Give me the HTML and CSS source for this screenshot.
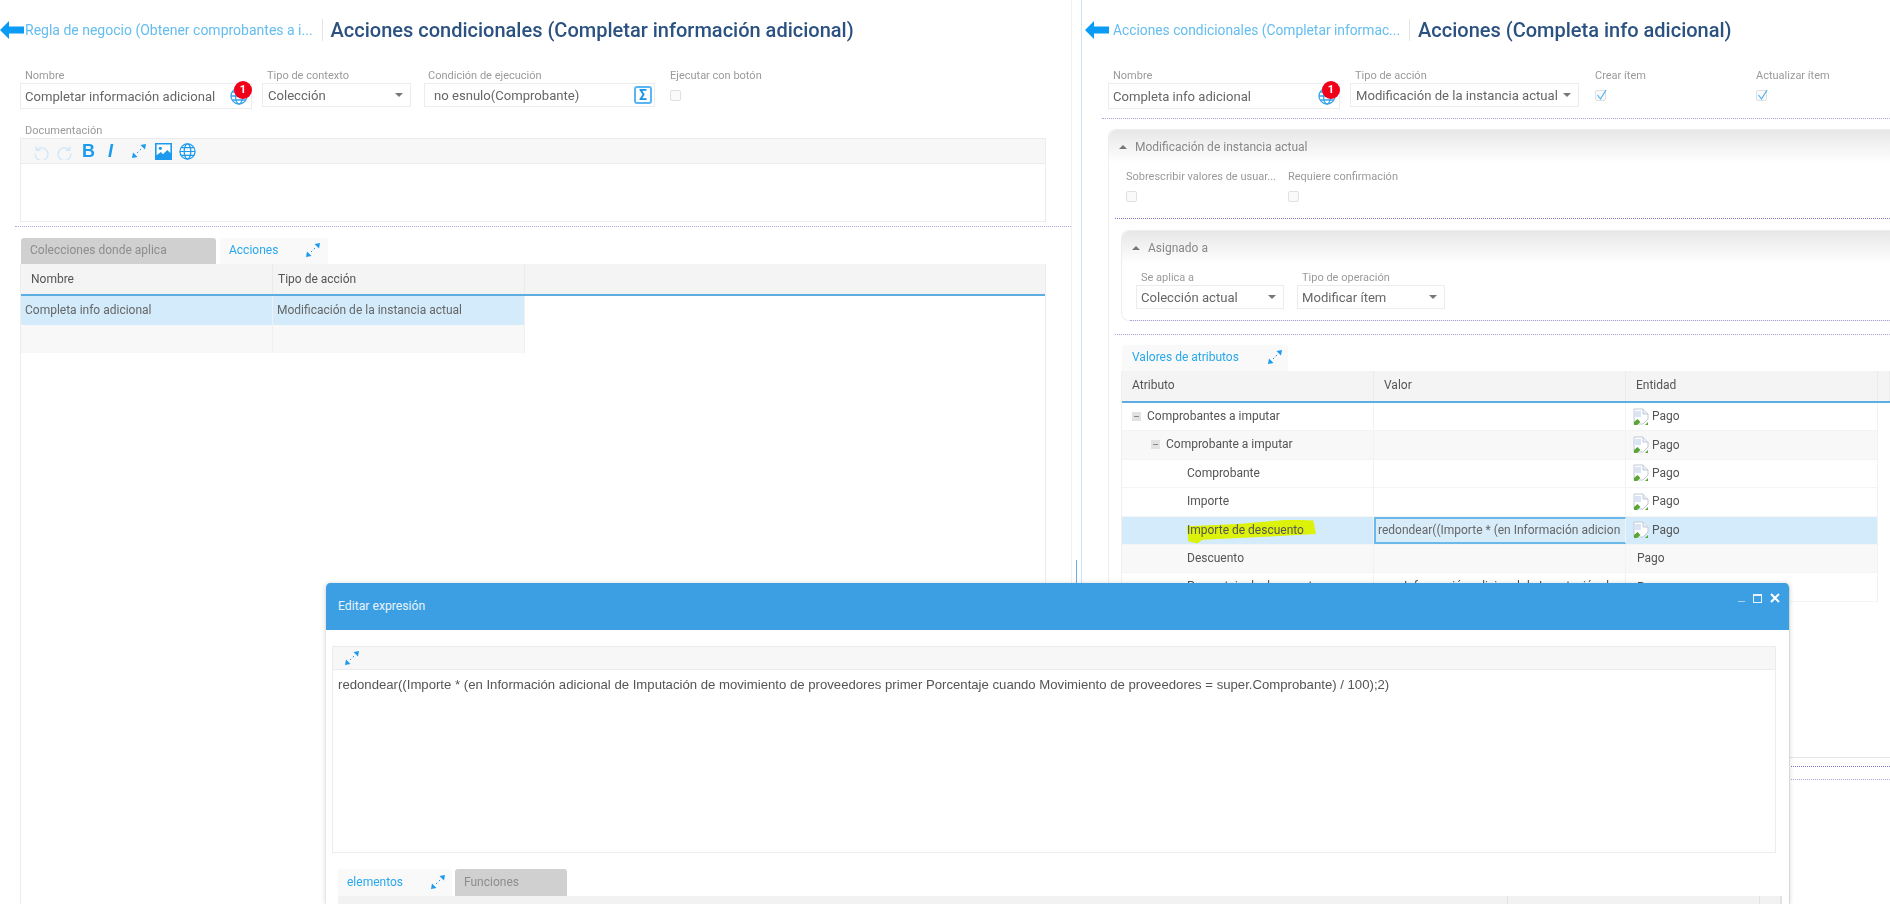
FILE: index.html
```html
<!DOCTYPE html>
<html lang="es">
<head>
    <meta charset="UTF-8">
    <meta name="viewport" content="width=device-width, initial-scale=1.0">
    <title>Acciones condicionales</title>
    <link rel="stylesheet" href="styles.css">
</head>
<body>
    <svg class="sprite" xmlns="http://www.w3.org/2000/svg">
        <symbol id="i-back" viewBox="0 0 24 18">
            <path d="M0 9 9 0v5.500h15v7H9V18z"/>
        </symbol>
        <symbol id="i-expand" viewBox="0 0 14 14">
            <path d="M14 0 8.500 1 13 5.500zM0 14l1-5.500L5.500 13z"/>
            <path d="M9 5 7.800 6.200M6.200 7.800 5 9" stroke="currentColor" fill="none"/>
        </symbol>
        <symbol id="i-globe" viewBox="0 0 18 18">
            <g fill="none" stroke="currentColor" stroke-width="1.300">
                <circle cx="9" cy="9" r="8"/>
                <ellipse cx="9" cy="9" rx="3.500" ry="8"/>
                <path d="M1 9h16M2.200 5h13.600M2.200 13h13.600"/>
            </g>
        </symbol>
        <symbol id="i-broken" viewBox="0 0 16 18">
            <path d="M1 1h9l5 5v5l-5 5H1z" fill="#fff" stroke="#c2cad6"/>
            <path d="M10 1v5h5" fill="#e9eff6" stroke="#c2cad6"/>
            <path d="M2 3h6v6H2z" fill="#d9e5f5"/>
            <path d="M1 17v-3l3.500-3 3 3-3.500 3z" fill="#5aa534"/>
            <path d="M12 17l3-3v3z" fill="#5aa534"/>
        </symbol>
        <symbol id="i-tick" viewBox="0 0 11 12">
            <path d="M1.500 6 4.500 10 10 1" fill="none" stroke="#4fb3f2" stroke-width="1.200"/>
        </symbol>
    </svg>

    <div class="app">
        <section class="pane pane-left">
            <header class="page-head">
                <svg class="back"><use href="#i-back"/></svg>
                <a class="crumb crumb-left">Regla de negocio (Obtener comprobantes a i...</a>
                <h1 class="title">Acciones condicionales (Completar información adicional)</h1>
            </header>

            <div class="form-row form-row-left">
                <div class="field w-name">
                    <label>Nombre</label>
                    <div class="control control-tall">
                        <span>Completar información adicional</span>
                        <span class="globe-wrap">
                            <svg class="globe"><use href="#i-globe"/></svg>
                            <b class="badge">1</b>
                        </span>
                    </div>
                </div>
                <div class="field w-context">
                    <label>Tipo de contexto</label>
                    <div class="control select"><span>Colección</span><i class="caret"></i></div>
                </div>
                <div class="field w-cond">
                    <label class="label-cond">Condición de ejecución</label>
                    <div class="control cond"><span>no esnulo(Comprobante)</span><b class="sigma">Σ</b></div>
                </div>
                <div class="field">
                    <label class="label-flush">Ejecutar con botón</label>
                    <i class="check"></i>
                </div>
            </div>

            <div class="doc">
                <label>Documentación</label>
                <div class="editor">
                    <div class="editor-tools">
                        <svg class="tool faded" viewBox="0 0 16 16"><path d="M4 3v4h4M4.500 6.500A6 6 0 1 1 3 10" fill="none" stroke="currentColor" stroke-width="1.200"/></svg>
                        <svg class="tool faded" viewBox="0 0 16 16"><path d="M12 3v4H8M11.500 6.500A6 6 0 1 0 13 10" fill="none" stroke="currentColor" stroke-width="1.200"/></svg>
                        <b class="tool-b">B</b>
                        <i class="tool-i">I</i>
                        <svg class="tool-x"><use href="#i-expand"/></svg>
                        <svg class="tool" viewBox="0 0 16 16"><path d="M0 0h16v16H0z"/><path d="M1.500 1.500h13v8l-3-3-4 4-2-2-4 3z" fill="#fff"/><circle cx="5" cy="5" r="1.500"/></svg>
                        <svg class="tool"><use href="#i-globe"/></svg>
                    </div>
                </div>
            </div>

            <hr class="dots dots-left">

            <div class="tabs tabs-left">
                <span class="tab tab-off tab-colecciones">Colecciones donde aplica</span>
                <span class="tab tab-on tab-acciones">Acciones<svg class="expand"><use href="#i-expand"/></svg></span>
            </div>
            <div class="grid-left">
                <div class="grid-head">
                    <span>Nombre</span><span>Tipo de acción</span><span></span>
                </div>
                <div class="grid-row selected">
                    <span>Completa info adicional</span><span>Modificación de la instancia actual</span>
                </div>
                <div class="grid-row alt">
                    <span></span><span></span>
                </div>
            </div>
        </section>

        <div class="splitter"><i class="handle"></i></div>

        <section class="pane pane-right">
            <header class="page-head">
                <svg class="back"><use href="#i-back"/></svg>
                <a class="crumb crumb-right">Acciones condicionales (Completar informac...</a>
                <h1 class="title">Acciones (Completa info adicional)</h1>
            </header>

            <div class="form-row form-row-right">
                <div class="field w-name">
                    <label>Nombre</label>
                    <div class="control control-tall">
                        <span>Completa info adicional</span>
                        <span class="globe-wrap">
                            <svg class="globe"><use href="#i-globe"/></svg>
                            <b class="badge">1</b>
                        </span>
                    </div>
                </div>
                <div class="field w-action">
                    <label>Tipo de acción</label>
                    <div class="control select"><span>Modificación de la instancia actual</span><i class="caret"></i></div>
                </div>
                <div class="field w-create">
                    <label class="label-flush">Crear ítem</label>
                    <i class="check"><svg class="tick"><use href="#i-tick"/></svg></i>
                </div>
                <div class="field">
                    <label class="label-flush">Actualizar ítem</label>
                    <i class="check"><svg class="tick"><use href="#i-tick"/></svg></i>
                </div>
            </div>

            <hr class="dots dots-right">

            <div class="panel panel-outer">
                <div class="panel-head"><i class="tri"></i>Modificación de instancia actual</div>
                <div class="flags">
                    <div class="flag w-flag">
                        <label>Sobrescribir valores de usuar...</label>
                        <i class="check"></i>
                    </div>
                    <div class="flag">
                        <label>Requiere confirmación</label>
                        <i class="check"></i>
                    </div>
                </div>
                <hr class="dots dots-inner">

                <div class="panel panel-inner">
                    <div class="panel-head"><i class="tri"></i>Asignado a</div>
                    <div class="form-row form-row-assign">
                        <div class="field w-assign">
                            <label>Se aplica a</label>
                            <div class="control select"><span>Colección actual</span><i class="caret"></i></div>
                        </div>
                        <div class="field w-assign">
                            <label>Tipo de operación</label>
                            <div class="control select"><span>Modificar ítem</span><i class="caret"></i></div>
                        </div>
                    </div>
                    <hr class="dots dots-panel">
                </div>
                <hr class="dots dots-after">

                <div class="tabs tabs-values">
                    <span class="tab tab-on tab-valores">Valores de atributos<svg class="expand"><use href="#i-expand"/></svg></span>
                </div>
                <div class="tree">
                    <div class="tree-head">
                        <span>Atributo</span><span>Valor</span><span>Entidad</span><span></span>
                    </div>
                    <div class="tree-row">
                        <span class="lvl-0"><i class="minus"></i>Comprobantes a imputar</span><span></span>
                        <span class="ent"><svg class="broken"><use href="#i-broken"/></svg>Pago</span>
                    </div>
                    <div class="tree-row alt">
                        <span class="lvl-1"><i class="minus"></i>Comprobante a imputar</span><span></span>
                        <span class="ent"><svg class="broken"><use href="#i-broken"/></svg>Pago</span>
                    </div>
                    <div class="tree-row">
                        <span class="lvl-2">Comprobante</span><span></span>
                        <span class="ent"><svg class="broken"><use href="#i-broken"/></svg>Pago</span>
                    </div>
                    <div class="tree-row">
                        <span class="lvl-2">Importe</span><span></span>
                        <span class="ent"><svg class="broken"><use href="#i-broken"/></svg>Pago</span>
                    </div>
                    <div class="tree-row selected">
                        <span class="lvl-2"><em class="marker">Importe de descuento</em></span>
                        <span class="cell-edit">redondear((Importe * (en Información adicion</span>
                        <span class="ent"><svg class="broken"><use href="#i-broken"/></svg>Pago</span>
                    </div>
                    <div class="tree-row alt">
                        <span class="lvl-2">Descuento</span><span></span>
                        <span class="ent ent-plain">Pago</span>
                    </div>
                    <div class="tree-row">
                        <span class="lvl-2">Porcentaje de descuento</span>
                        <span class="cell-value">en Información adicional de Imputación de</span>
                        <span class="ent ent-plain">Pago</span>
                    </div>
                </div>
            </div>
            <hr class="dots dots-foot-a">
            <hr class="dots dots-foot-b">
        </section>
    </div>

    <div class="modal">
        <div class="modal-head">
            <span>Editar expresión</span>
            <div class="modal-actions">
                <i class="win-min"></i><i class="win-max"></i>
                <svg class="win-close" viewBox="0 0 10 10"><path d="M1 1l8 8M9 1 1 9"/></svg>
            </div>
        </div>
        <div class="expr">
            <div class="expr-tools"><svg class="expand"><use href="#i-expand"/></svg></div>
            <div class="expr-body">redondear((Importe * (en Información adicional de Imputación de movimiento de proveedores primer Porcentaje cuando Movimiento de proveedores = super.Comprobante) / 100);2)</div>
        </div>
        <div class="tabs tabs-modal">
            <span class="tab tab-on tab-elementos">elementos<svg class="expand"><use href="#i-expand"/></svg></span>
            <span class="tab tab-off tab-funciones">Funciones</span>
        </div>
        <div class="modal-grid"><span></span><span></span><span></span><span></span></div>
    </div>
</body>
</html>
```

FILE: styles.css
```css
* {
    box-sizing: border-box;
}
html, body {
    margin: 0;
    height: 904px;
    overflow: hidden;
}
body {
    position: relative;
    font-family: Roboto, "Liberation Sans", sans-serif;
    font-size: 12px;
    color: #555;
    background-color: white;
    filter: blur(0.45px);
}
.sprite {
    display: none;
}
label {
    display: block;
    height: 15px;
    line-height: 16px;
    font-size: 11px;
    color: #9a9a9a;
    padding-left: 5px;
    white-space: nowrap;
}
.label-flush {
    padding-left: 0;
}
.label-cond {
    padding-left: 4px;
}

/* panes */
.app {
    display: flex;
    height: 904px;
}
.pane {
    overflow: hidden;
    height: 904px;
}
.pane-left {
    width: 1071px;
    flex: none;
}
.pane-right {
    flex: 1;
    min-width: 0;
}
.splitter {
    position: relative;
    width: 11px;
    flex: none;
    border-left: 1px solid #f1f1f1;
    border-right: 1px solid #cfe3f8;
}
.handle {
    position: absolute;
    left: 4px;
    top: 560px;
    width: 1px;
    height: 40px;
    background-color: #6aaee8;
}

/* header */
.page-head {
    display: flex;
    align-items: center;
    height: 60px;
    white-space: nowrap;
}
.back {
    width: 24px;
    height: 18px;
    fill: #0a9bf5;
    flex: none;
}
.pane-right .back {
    margin-left: 3px;
}
.crumb {
    color: #63bdf0;
    font-size: 14px;
    margin-left: 1px;
    padding-right: 9px;
    border-right: 1px solid #e4e4e4;
    line-height: 22px;
}
.crumb-right {
    margin-left: 4px;
    font-size: 13.800px;
}
.title {
    margin: 0 0 0 8px;
    font-size: 20px;
    font-weight: 500;
    color: #2b5180;
}

/* form */
.form-row {
    display: flex;
    margin-top: 8px;
}
.form-row-left {
    padding-left: 20px;
}
.form-row-right {
    padding-left: 26px;
}
.field {
    flex: none;
}
.w-name {
    width: 232px;
    margin-right: 10px;
}
.w-context {
    width: 149px;
    margin-right: 13px;
}
.w-cond {
    width: 231px;
    margin-right: 15px;
}
.w-action {
    width: 229px;
    margin-right: 16px;
}
.w-create {
    width: 161px;
}
.control {
    display: flex;
    align-items: center;
    justify-content: space-between;
    height: 24px;
    border: 1px solid #ececec;
    background-color: white;
    padding-left: 5px;
    font-size: 13.100px;
    color: #666;
    white-space: nowrap;
}
.control-tall {
    height: 26px;
    padding-left: 4px;
    padding-right: 3px;
}
.select {
    padding-right: 7px;
}
.w-assign .select {
    padding-left: 4px;
}
.cond {
    padding-left: 9px;
    padding-right: 2px;
}
.caret {
    flex: none;
    border-left: 4px solid transparent;
    border-right: 4px solid transparent;
    border-top: 4px solid #777;
}
.globe-wrap {
    position: relative;
    display: block;
    width: 18px;
    height: 18px;
}
.globe {
    display: block;
    width: 18px;
    height: 18px;
    color: #3aa3ec;
}
.badge {
    position: absolute;
    left: 4px;
    top: -6px;
    width: 18px;
    height: 18px;
    border-radius: 50%;
    background-color: #f00019;
    color: white;
    font-size: 11px;
    line-height: 18px;
    text-align: center;
}
.sigma {
    width: 18px;
    height: 18px;
    border: 2px solid #58b6f4;
    border-radius: 3px;
    color: #1b93e6;
    font-size: 14px;
    line-height: 14px;
    text-align: center;
}
.check {
    position: relative;
    display: block;
    width: 11px;
    height: 11px;
    margin-top: 7px;
    border: 1px solid #e0e0e0;
    border-radius: 2px;
    background-color: #fafafa;
}
.tick {
    position: absolute;
    left: 0;
    top: -2px;
    width: 11px;
    height: 12px;
}

/* documentation */
.doc {
    margin: 14px 25px 0 20px;
}
.editor {
    height: 84px;
    border: 1px solid #ececec;
}
.editor-tools {
    display: flex;
    align-items: center;
    gap: 7px;
    height: 25px;
    padding-left: 11px;
    background-color: #f7f7f7;
    border-bottom: 1px solid #ececec;
    color: #1c9bee;
}
.tool {
    width: 17px;
    height: 17px;
    fill: currentColor;
}
.faded {
    color: #cfe6f8;
}
.faded + .faded {
    margin-left: 1px;
}
.tool-b {
    width: 14px;
    font-family: "Liberation Sans", sans-serif;
    font-size: 18px;
    margin-left: 1px;
}
.tool-i {
    width: 14px;
    font-family: "Liberation Sans", sans-serif;
    font-size: 18px;
    font-weight: bold;
    margin-left: 5px;
}
.tool-x {
    width: 14px;
    height: 14px;
    fill: currentColor;
    margin-left: 3px;
}
.tool-x + .tool {
    margin-left: 2px;
}

.dots {
    height: 0;
    margin: 0;
    border: 0;
    border-top: 1px dotted #aaa6dc;
}
.dots-left {
    margin: 4px 0 0 15px;
}
.dots-right {
    margin: 9px 0 0 20px;
}

/* tabs */
.tabs {
    display: flex;
    gap: 4px;
    height: 26px;
}
.tabs-left {
    margin: 11px 0 0 21px;
}
.tab {
    display: flex;
    align-items: center;
    justify-content: space-between;
    height: 26px;
    border-bottom: 2px solid transparent;
    border-radius: 3px 3px 0 0;
    white-space: nowrap;
}
.tab-off {
    background-color: #d0d0d0;
    color: #8d8d8d;
}
.tab-on {
    background-color: #f9f9f9;
    color: #29a8ec;
}
.expand {
    width: 14px;
    height: 14px;
    fill: #1c9bee;
    color: #1c9bee;
}
.tab-colecciones {
    width: 195px;
    padding-left: 9px;
}
.tab-acciones {
    width: 108px;
    padding: 0 8px 0 9px;
}
.tab-valores {
    width: 166px;
    padding: 0 6px 0 10px;
}
.tab-elementos {
    width: 114px;
    padding: 0 7px 0 9px;
}
.tab-funciones {
    width: 112px;
    padding-left: 9px;
}

/* left grid */
.grid-left {
    margin-left: 20px;
    width: 1026px;
    height: 640px;
    border-left: 1px solid #ececec;
    border-right: 1px solid #ececec;
}
.grid-head, .grid-row {
    display: grid;
    grid-template-columns: 252px 252px;
}
.grid-head {
    grid-template-columns: 252px 252px 1fr;
    height: 32px;
    background-color: #f4f4f4;
    border-bottom: 2px solid #5dade2;
    color: #555;
}
.grid-head span {
    padding-left: 10px;
    line-height: 30px;
    border-right: 1px solid #ebebeb;
}
.grid-head span:nth-child(2) {
    padding-left: 5px;
}
.grid-head span:last-child {
    border-right: 0;
}
.grid-row {
    width: 504px;
    height: 28.500px;
    line-height: 29px;
    color: #666;
}
.grid-row span {
    padding-left: 4px;
    border-right: 1px solid #f0f0f0;
}
.selected {
    background-color: #d3ebfa;
}
.alt {
    background-color: #f8f8f8;
}

/* right side panels */
.panel {
    border: 1px solid #eeeeee;
    border-right: 0;
    border-radius: 8px 0 0 8px;
}
.panel-outer {
    margin: 10px 0 0 26px;
    height: 629px;
    border-bottom: 1px solid #e4e4e4;
    border-radius: 8px 0 0 0;
}
.panel-head {
    display: flex;
    align-items: center;
    gap: 8px;
    height: 33px;
    padding-left: 10px;
    background: linear-gradient(#e7e7e7, #ffffff);
    border-radius: 8px 0 0 0;
    color: #888;
}
.tri {
    border-left: 4px solid transparent;
    border-right: 4px solid transparent;
    border-bottom: 4px solid #777;
}
.flags {
    display: flex;
    height: 55px;
    padding: 6px 0 0 17px;
}
.flag label {
    padding-left: 0;
}
.w-flag {
    width: 162px;
}
.dots-inner {
    margin-left: 6px;
    border-top-color: #7e78c8;
}
.panel-inner {
    margin: 11px 0 0 12px;
    height: 91px;
}
.form-row-assign {
    margin-top: 6px;
    padding-left: 14px;
    gap: 13px;
}
.w-assign {
    width: 148px;
}
.dots-panel {
    margin: 11px 0 0 8px;
}
.dots-after {
    margin: 13px 0 0 6px;
}
.tabs-values {
    margin: 10px 0 0 13px;
}

/* tree */
.tree {
    margin-left: 12px;
    border-left: 1px solid #f0f0f0;
}
.tree-head, .tree-row {
    display: grid;
    grid-template-columns: 252px 252px 252px 1fr;
}
.tree-head {
    height: 32px;
    background-color: #f4f4f4;
    border-bottom: 2px solid #5dade2;
    line-height: 29px;
    color: #555;
}
.tree-head span {
    padding-left: 10px;
    border-right: 1px solid #ebebeb;
}
.tree-row {
    width: 756px;
    height: 28.400px;
    grid-template-columns: 252px 252px 252px;
    line-height: 27px;
    border-bottom: 1px solid #f4f4f4;
    color: #555;
    border-right: 1px solid #f0f0f0;
}
.tree-row span {
    border-right: 1px solid #f2f2f2;
    white-space: nowrap;
    overflow: hidden;
}
.lvl-0 {
    padding-left: 10px;
}
.lvl-1 {
    padding-left: 29px;
}
.lvl-2 {
    padding-left: 65px;
}
.minus {
    display: inline-block;
    position: relative;
    width: 9px;
    height: 9px;
    margin-right: 6px;
    background-color: #e2e2e2;
    vertical-align: -1px;
}
.minus::after {
    content: "";
    position: absolute;
    left: 2px;
    right: 2px;
    top: 4px;
    height: 1px;
    background-color: #888;
}
.ent {
    display: flex;
    align-items: center;
    padding-left: 7px;
}
.ent-plain {
    padding-left: 11px;
}
.broken {
    width: 16px;
    height: 18px;
    margin-right: 3px;
    flex: none;
}
.tree-row .lvl-2:has(.marker) {
    overflow: visible;
}
.marker {
    position: relative;
    z-index: 0;
    font-style: normal;
}
/* brush stroke behind the text, slightly uneven */
.marker::before {
    content: "";
    position: absolute;
    z-index: -1;
    left: 0;
    top: -3px;
    width: 129px;
    height: 24px;
    background-color: #dcf20a;
    clip-path: polygon(0 28%, 40% 18%, 80% 0, 98% 4%, 100% 60%, 60% 72%, 12% 84%, 8% 100%, 1% 90%);
}
.cell-edit {
    padding-left: 2px;
    border: 2px solid #6bb8ea;
    line-height: 23px;
    background-color: #d8ecfa;
    color: #666;
}
.cell-value {
    padding-left: 14px;
}
.dots-foot-a {
    margin: 8px 0 0 0;
    border-top-color: #7e78c8;
}
.dots-foot-b {
    margin: 12px 0 0 0;
}

/* modal */
.modal {
    position: absolute;
    left: 325px;
    top: 583px;
    width: 1465px;
    height: 321px;
    overflow: hidden;
    background-color: white;
    border-right: 1px solid #d3dcd3;
    border-left: 1px solid #e8e8e8;
    border-radius: 5px 5px 0 0;
    box-shadow: 0 0 4px rgba(0, 0, 0, 0.15);
}
.modal-head {
    display: flex;
    justify-content: space-between;
    height: 47px;
    padding-left: 12px;
    line-height: 46px;
    background-color: #3d9fe3;
    color: #e8f4fc;
    font-size: 12.200px;
}
.modal-actions {
    display: flex;
    align-items: center;
    gap: 8px;
    height: 30px;
    padding-right: 9px;
}
.win-min {
    width: 7px;
    height: 1px;
    margin-top: 6px;
    background-color: #a9d4f3;
}
.win-max {
    width: 9px;
    height: 9px;
    border: 1px solid #e8f4fc;
    border-top-width: 2px;
}
.win-close {
    width: 10px;
    height: 10px;
    stroke: white;
    stroke-width: 2;
}
.expr {
    margin: 16px 13px 0 6px;
    height: 207px;
    border: 1px solid #ececec;
}
.expr-tools {
    display: flex;
    align-items: center;
    height: 23px;
    padding-left: 12px;
    background-color: #f7f7f7;
    border-bottom: 1px solid #ececec;
}
.expr-body {
    padding: 7px 5px;
    font-family: "Liberation Sans", sans-serif;
    font-size: 13.160px;
    color: #555;
    white-space: nowrap;
}
.tabs-modal {
    margin: 16px 0 0 12px;
    gap: 3px;
    height: 27px;
}
.tabs-modal .tab {
    height: 27px;
}
.modal-grid {
    display: grid;
    grid-template-columns: 1170px 252px 21px 1fr;
    width: 1443px;
    height: 10px;
    margin-left: 12px;
    background-color: #f2f2f2;
}
.modal-grid span {
    border-right: 1px solid #e2e2e2;
}
```
